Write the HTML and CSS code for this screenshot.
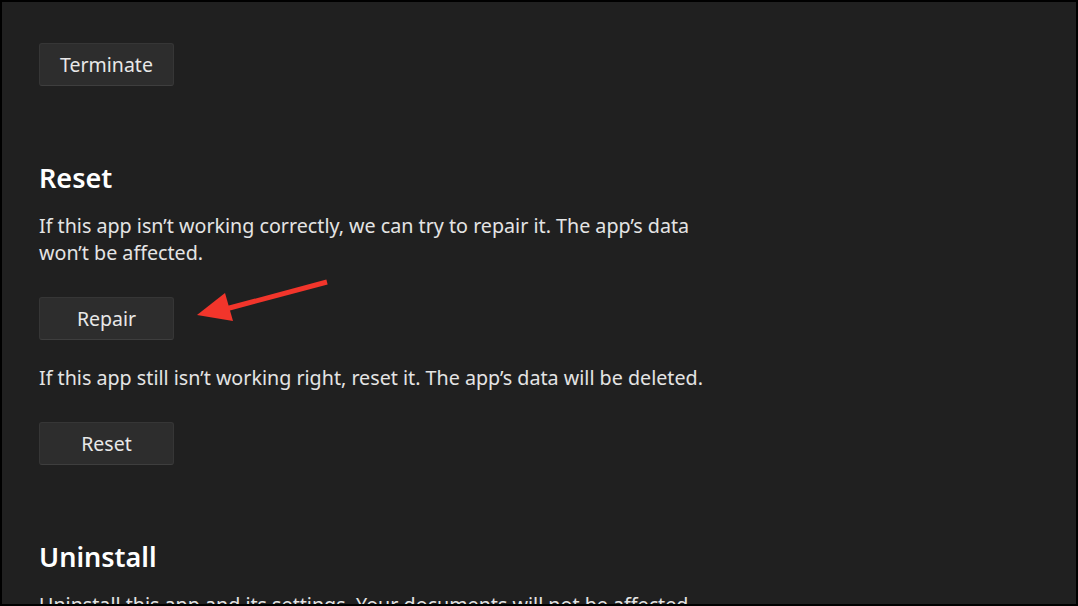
FILE: index.html
```html
<!DOCTYPE html>
<html lang="en">
<head>
    <meta charset="UTF-8">
    <title>Advanced options</title>
    <link rel="stylesheet" href="styles.css">
</head>
<body>
    <div class="window">
        <div class="page">
            <h2 class="heading clipped">Terminate</h2>
            <button class="btn btn-first" type="button">Terminate</button>

            <h2 class="heading">Reset</h2>
            <p class="desc">If this app isn’t working correctly, we can try to repair it. The app’s data won’t be affected.</p>
            <button class="btn" type="button">Repair</button>
            <p class="desc desc-gap">If this app still isn’t working right, reset it. The app’s data will be deleted.</p>
            <button class="btn" type="button">Reset</button>

            <h2 class="heading">Uninstall</h2>
            <p class="desc">Uninstall this app and its settings. Your documents will not be affected.</p>

            <!-- Pfeil auf den Repair-Button -->
            <svg class="arrow" width="140" height="50" viewBox="190 275 140 50">
                <line x1="327" y1="282" x2="222" y2="310" stroke="#f2352b" stroke-width="5"/>
                <polygon points="197,315 225,293 233,321" fill="#f2352b"/>
            </svg>
        </div>
    </div>
</body>
</html>
```

FILE: styles.css
```css
/* Grund-Layout */
html, body {
    margin: 0;
    padding: 0;
    background: #000;
}

.window {
    margin: 2px;
    height: 602px;
    background-color: #202020;
    overflow: hidden;
}

.page {
    position: relative;
    display: flow-root;
    padding-left: 37px;
    font-family: "Noto Sans", "Open Sans", sans-serif;
    color: #e4e4e4;
}

.heading {
    margin: 74px 0 0 0;
    font-size: 27px;
    line-height: 36px;
    font-weight: 600;
    color: #fff;
}

.heading.clipped {
    margin-top: -30px;
}

.desc {
    max-width: 690px;
    margin: 16px 0 0 0;
    font-size: 19.7px;
    line-height: 27px;
}

.desc-gap {
    margin-top: 24px;
}

.btn {
    display: block;
    width: 135px;
    height: 43px;
    margin-top: 31px;
    padding: 0;
    background-color: #2d2d2d;
    border: 1px solid #363636;
    border-bottom-color: #3e3e3e;
    border-radius: 3px;
    color: #e8e8e8;
    font-family: inherit;
    font-size: 19.5px;
}

.btn-first {
    margin-top: 35px;
}

/* Pfeil liegt über dem Inhalt */
.arrow {
    position: absolute;
    left: 188px;
    top: 273px;
}
```
